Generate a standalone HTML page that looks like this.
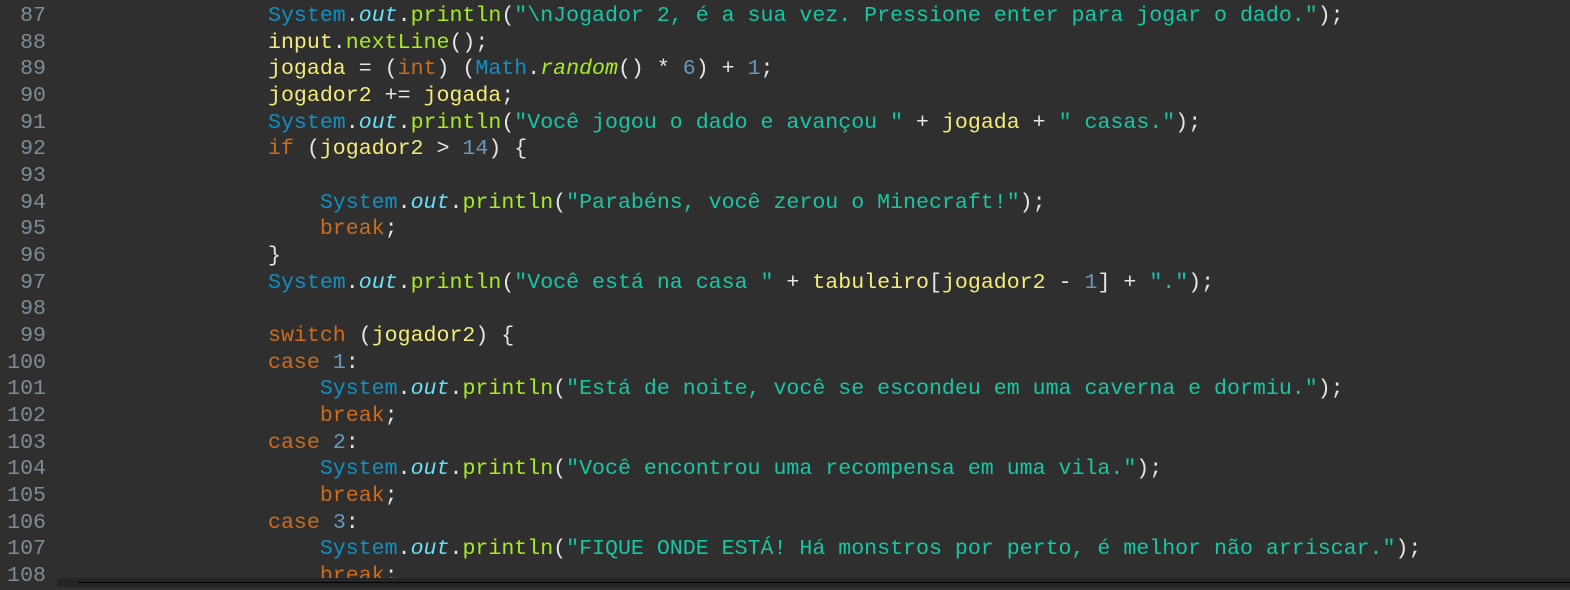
<!DOCTYPE html>
<html><head><meta charset="utf-8"><style>
html,body{margin:0;padding:0;background:#2f2f2f;width:1570px;height:587px;overflow:hidden}
.w{position:absolute;left:0;top:3px;font-family:"Liberation Mono",monospace;font-size:21.6px;line-height:26.67px;white-space:pre}
.n{position:absolute;left:0;width:46px;text-align:right;color:#7f8c94}
.c{position:absolute;left:268px;color:#e6e6e6}
.v{color:#f3ec79}.k{color:#cc6c1d}.s{color:#1290c3}.o{color:#66e1f8;font-style:italic}.m{color:#a7ec21}.i{color:#a7ec21;font-style:italic}.t{color:#17c6a3}.d{color:#6897bb}
.bar{position:absolute;left:57px;top:578px;width:1513px;height:9px;background:#252525}
.bar2{position:absolute;left:78px;top:582px;width:1492px;height:1px;background:#000}
</style></head><body>
<div class="w n">87
88
89
90
91
92
93
94
95
96
97
98
99
100
101
102
103
104
105
106
107
108</div>
<div class="w c"><span class="s">System</span>.<span class="o">out</span>.<span class="m">println</span>(<span class="t">"\nJogador 2, é a sua vez. Pressione enter para jogar o dado."</span>);
<span class="v">input</span>.<span class="m">nextLine</span>();
<span class="v">jogada</span> = (<span class="k">int</span>) (<span class="s">Math</span>.<span class="i">random</span>() * <span class="d">6</span>) + <span class="d">1</span>;
<span class="v">jogador2</span> += <span class="v">jogada</span>;
<span class="s">System</span>.<span class="o">out</span>.<span class="m">println</span>(<span class="t">"Você jogou o dado e avançou "</span> + <span class="v">jogada</span> + <span class="t">" casas."</span>);
<span class="k">if</span> (<span class="v">jogador2</span> &gt; <span class="d">14</span>) {

    <span class="s">System</span>.<span class="o">out</span>.<span class="m">println</span>(<span class="t">"Parabéns, você zerou o Minecraft!"</span>);
    <span class="k">break</span>;
}
<span class="s">System</span>.<span class="o">out</span>.<span class="m">println</span>(<span class="t">"Você está na casa "</span> + <span class="v">tabuleiro</span>[<span class="v">jogador2</span> - <span class="d">1</span>] + <span class="t">"."</span>);

<span class="k">switch</span> (<span class="v">jogador2</span>) {
<span class="k">case</span> <span class="d">1</span>:
    <span class="s">System</span>.<span class="o">out</span>.<span class="m">println</span>(<span class="t">"Está de noite, você se escondeu em uma caverna e dormiu."</span>);
    <span class="k">break</span>;
<span class="k">case</span> <span class="d">2</span>:
    <span class="s">System</span>.<span class="o">out</span>.<span class="m">println</span>(<span class="t">"Você encontrou uma recompensa em uma vila."</span>);
    <span class="k">break</span>;
<span class="k">case</span> <span class="d">3</span>:
    <span class="s">System</span>.<span class="o">out</span>.<span class="m">println</span>(<span class="t">"FIQUE ONDE ESTÁ! Há monstros por perto, é melhor não arriscar."</span>);
    <span class="k">break</span>;</div>
<div class="bar"></div><div class="bar2"></div>
</body></html>
